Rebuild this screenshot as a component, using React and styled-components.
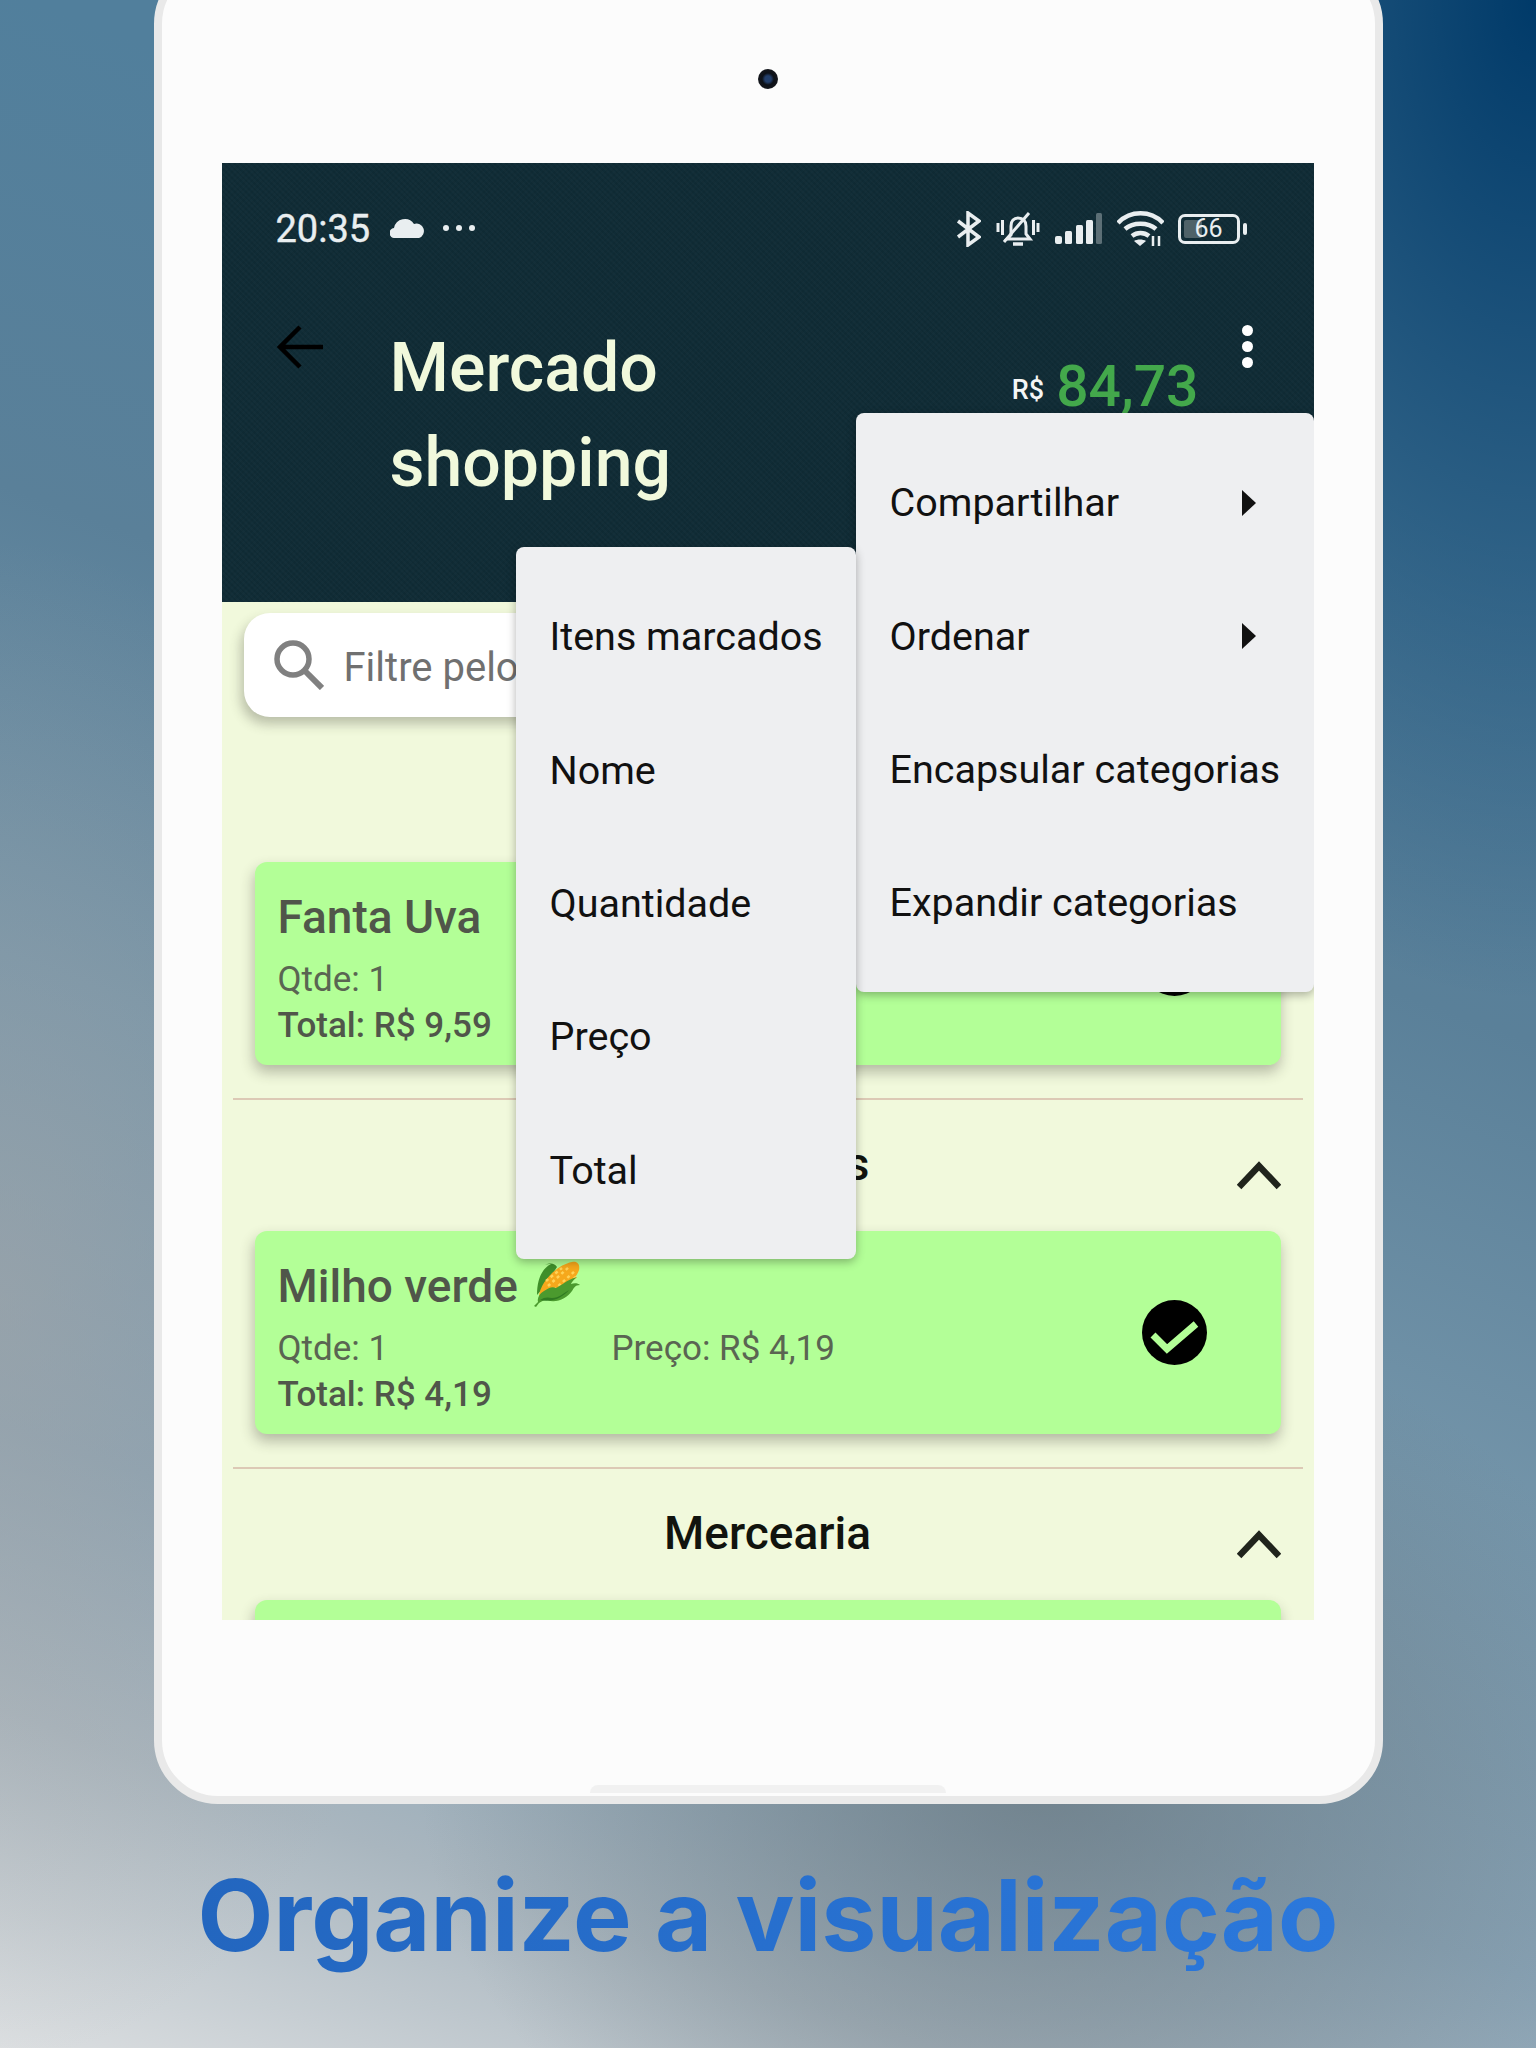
import styled, { createGlobalStyle } from 'styled-components';

const GlobalStyle = createGlobalStyle`
  html, body {
    margin: 0;
    padding: 0;
  }
  body {
    font-family: Roboto, "Liberation Sans", sans-serif;
  }
`

const Page = styled.div`
  width: 1536px;
  height: 2048px;
  overflow: hidden;
  display: flex;
  flex-direction: column;
  align-items: center;
  background:
    radial-gradient(ellipse 620px 480px at 1040px 1780px, rgba(104, 118, 126, 0.7) 0%, rgba(104, 118, 126, 0) 100%),
    radial-gradient(ellipse 460px 760px at 0px 1300px, rgba(165, 165, 165, 0.55) 0%, rgba(165, 165, 165, 0) 100%),
    radial-gradient(ellipse 620px 1000px at 1536px 0px, rgba(0, 58, 105, 1) 0%, rgba(0, 58, 105, 0.55) 45%, rgba(0, 58, 105, 0) 100%),
    linear-gradient(200deg, #517f9c 0%, #517f9c 21%, #5a8099 40%, #7394a9 58%, #88a2b4 76%, #a9b6bf 87%, #dcdfe1 100%);
`

const Device = styled.div`
  box-sizing: border-box;
  flex: none;
  width: 1229px;
  height: 1844px;
  margin-top: -40px;
  border: 8px solid #e9e9e9;
  border-radius: 64px;
  background: #fcfcfc;
  display: flex;
  flex-direction: column;
  align-items: center;
`

const Camera = styled.div`
  flex: none;
  width: 20px;
  height: 20px;
  margin-top: 101px;
  border-radius: 50%;
  background: radial-gradient(circle at 50% 50%, #233f6b 0 22%, #0d1118 42%, #1b1c20 100%);
`

const Screen = styled.div`
  position: relative;
  flex: none;
  align-self: flex-start;
  width: 1092px;
  height: 1457px;
  margin: 74px 0 0 60px;
  overflow: hidden;
  background: #f1f9dc;
`

const HomeBar = styled.div`
  flex: none;
  width: 356px;
  height: 8px;
  margin-top: 165px;
  border-radius: 8px 8px 0 0;
  background: #f1f1f1;
`

const Header = styled.header`
  box-sizing: border-box;
  height: 439px;
  padding-top: 40px;
  background-color: #102c36;
  background-image:
    repeating-linear-gradient(45deg, rgba(255, 255, 255, 0.015) 0 2px, transparent 2px 4px),
    repeating-linear-gradient(-45deg, rgba(0, 0, 0, 0.05) 0 2px, transparent 2px 4px);
`

const StatusBar = styled.div`
  height: 52px;
  padding: 0 67px 0 54px;
  display: flex;
  align-items: center;
  color: #e9eef0;
`

const Time = styled.span`
  font-size: 38px;
  line-height: 52px;
  margin-right: 20px;
  -webkit-text-stroke: 0.4px #e9eef0;
`

const CloudIcon = styled.svg`
  margin-top: -3px;
`

const StatusDots = styled.div`
  display: flex;
  gap: 7px;
  margin: -2px 0 0 19px;
  i {
    width: 6px;
    height: 6px;
    border-radius: 50%;
    background: #e9eef0;
  }
`

const StatusIcons = styled.div`
  margin-left: auto;
  display: flex;
  align-items: center;
  gap: 14px;
`

const Battery = styled.div`
  display: flex;
  align-items: center;
  gap: 3px;
`

const BatteryShell = styled.div`
  box-sizing: border-box;
  width: 62px;
  height: 30px;
  border: 3px solid #e9eef0;
  border-radius: 7px;
  padding: 3px;
  display: flex;
`

const BatteryLevel = styled.div`
  box-sizing: border-box;
  width: 18px;
  padding-left: 11px;
  border-radius: 2px;
  background: #4f6268;
  font-size: 25px;
  line-height: 18px;
  color: #e9eef0;
  white-space: nowrap;
`

const BatteryCap = styled.div`
  width: 4px;
  height: 12px;
  border-radius: 2px;
  background: #e9eef0;
`

const TopBar = styled.div`
  margin-top: 66px;
  padding: 0 61px 0 55px;
  display: flex;
  align-items: flex-start;
`

const BackIcon = styled.svg`
  flex: none;
  margin-top: 4px;
`

const Title = styled.h1`
  margin: 0 0 0 67px;
  font-size: 68px;
  line-height: 95px;
  font-weight: 500;
  color: #f1f9dc;
`

const Price = styled.div`
  margin-left: auto;
  margin-top: 33px;
  display: flex;
  align-items: baseline;
  gap: 12px;
  white-space: nowrap;
`

const PriceLabel = styled.span`
  position: relative;
  top: -7px;
  font-size: 27px;
  font-weight: 500;
  color: #f4f6f6;
`

const PriceValue = styled.span`
  font-size: 57px;
  line-height: 66px;
  font-weight: 500;
  color: #43a84b;
`

const MoreDots = styled.div`
  flex: none;
  margin: 4px 0 0 43px;
  display: flex;
  flex-direction: column;
  gap: 5px;
  i {
    width: 11px;
    height: 11px;
    border-radius: 50%;
    background: #fff;
  }
`

const Body = styled.div`
  padding-top: 11px;
`

const SearchBox = styled.div`
  box-sizing: border-box;
  height: 104px;
  margin: 0 22px 14px;
  padding-left: 30px;
  border-radius: 26px;
  background: #fff;
  box-shadow: -3px 7px 12px rgba(60, 60, 50, 0.3);
  display: flex;
  align-items: center;
  gap: 20px;
`

const SearchText = styled.span`
  margin-top: 5px;
  font-size: 40px;
  color: #707070;
  white-space: nowrap;
`

const Section = styled.section`
  margin: 0 11px;
  padding: 0 22px 33px;
  border-bottom: 2px solid #dcc9b5;
`

const SectionHead = styled.div`
  height: 131px;
  display: grid;
  grid-template-columns: 1fr auto 1fr;
  align-items: start;
`

const SectionTitle = styled.h2`
  margin: 38px 0 0;
  grid-column: 2;
  font-size: 46px;
  line-height: 52px;
  font-weight: 500;
  color: #11140e;
`

const Chevron = styled.svg`
  grid-column: 3;
  justify-self: end;
  margin-top: 61px;
`

const Card = styled.article`
  box-sizing: border-box;
  height: 203px;
  padding: 30px 74px 0 23px;
  border-radius: 12px;
  background: #b3ff97;
  box-shadow: -1px 7px 14px rgba(50, 50, 40, 0.32);
  display: flex;
  justify-content: space-between;
`

const CardText = styled.div`
  display: flex;
  flex-direction: column;
`

const ItemName = styled.div`
  height: 50px;
  margin-bottom: 15px;
  display: flex;
  align-items: center;
  gap: 14px;
  font-size: 46px;
  line-height: 50px;
  font-weight: 500;
  color: #50564a;
`

const ItemRow = styled.div`
  display: grid;
  grid-template-columns: 334px 1fr;
  font-size: 35px;
  line-height: 46px;
  color: #5a6552;
`

const ItemTotal = styled.div`
  font-size: 35px;
  line-height: 46px;
  font-weight: 500;
  color: #50564a;
`

const CheckIcon = styled.svg`
  flex: none;
  margin-top: 39px;
`

const Menu = styled.div`
  position: absolute;
  box-sizing: border-box;
  top: ${p => p.$top}px;
  left: ${p => p.$left}px;
  width: ${p => p.$width}px;
  padding: 23px 0 22px;
  border-radius: 8px;
  background: #eeeff1;
  box-shadow: 0 3px 10px rgba(0, 0, 0, 0.3);
`

const MenuItem = styled.div`
  height: 133.4px;
  padding: 0 34px;
  display: flex;
  align-items: center;
  justify-content: space-between;
  font-size: 39.5px;
  color: #111;
  white-space: nowrap;
`

const MenuArrow = styled.svg`
  margin-right: 24px;
`

const Tagline = styled.h3`
  margin: 52px 0 0;
  font-family: Inter, "Liberation Sans", sans-serif;
  font-size: 98.5px;
  line-height: 120px;
  font-weight: 700;
  white-space: nowrap;
  background: linear-gradient(90deg, #2366bf, #2b78dc);
  background-clip: text;
  -webkit-background-clip: text;
  color: transparent;
`

const mainMenu = ['Compartilhar', 'Ordenar', 'Encapsular categorias', 'Expandir categorias']
const sortMenu = ['Itens marcados', 'Nome', 'Quantidade', 'Preço', 'Total']

const sections = [
  { title: 'Bebidas', name: 'Fanta Uva', price: '9,59', total: '9,59' },
  { title: 'Enlatados', name: 'Milho verde', corn: true, price: '4,19', total: '4,19' },
  { title: 'Mercearia', name: 'Arroz', price: '5,29', total: '5,29' },
]

function CornIcon() {
  return (
    <svg width="50" height="50" viewBox="0 0 50 50">
      <path d="M5 34C5 20 9 8 19 3c-3 0-4 0-6 1 6-3 10-1 12 2L12 26z" fill="#3f8f2a" />
      <path d="M7 35C8 22 24 4 40 1c6-1 8 3 7 8-4 12-22 28-40 26z" fill="#f6a81c" />
      <path d="M16 25 37 6M14 20 30 7M22 29 44 9M28 29 45 15" stroke="#ffd257" strokeWidth="2.500" strokeDasharray="3 3" />
      <path d="M2 45l4-4c-1-4 2-9 6-11 5-3 8-5 12-3 5-2 10-8 21-11-5 4-6 7-6 7 3-1 7-1 9 1-5 0-6 3-8 6-5 7-16 13-25 9-3 0-5 1-8 3l-3 4z" fill="#4b9a2e" />
      <path d="M8 39c4-3 8-3 12-2 7 0 12-5 17-8-5 6-15 13-29 10z" fill="#2f7a22" />
    </svg>
  )
}

function Item({ name, corn, price, total }) {
  return (
    <Card>
      <CardText>
        <ItemName>
          {name}
          {corn && <CornIcon />}
        </ItemName>
        <ItemRow>
          <span>Qtde: 1</span>
          <span>Preço: R$ {price}</span>
        </ItemRow>
        <ItemTotal>Total: R$ {total}</ItemTotal>
      </CardText>
      <CheckIcon width="65" height="65" viewBox="0 0 65 65">
        <circle cx="32.5" cy="32.5" r="32.5" fill="#000" />
        <path d="M11 35l14 14 29-25" fill="none" stroke="#b3ff97" strokeWidth="7" />
      </CheckIcon>
    </Card>
  )
}

function App() {
  return (
    <Page>
      <GlobalStyle />
      <Device>
        <Camera />
        <Screen>
          <Header>
            <StatusBar>
              <Time>20:35</Time>
              <CloudIcon width="34" height="21" viewBox="0 0 34 21">
                <path d="M5 21a5 5 0 0 1-1-10A11 11 0 0 1 24 7a7 7 0 0 1 5 14z" fill="#e9eef0" />
              </CloudIcon>
              <StatusDots><i /><i /><i /></StatusDots>
              <StatusIcons>
                <svg width="25" height="36" viewBox="0 0 25 36" fill="none" stroke="#e9eef0" strokeWidth="3.500">
                  <path d="M2 10l21 16-11 8V2l11 8L2 26" />
                </svg>
                <svg width="46" height="36" viewBox="0 0 46 36" fill="none" stroke="#e9eef0" strokeWidth="3">
                  <path d="M13 27l3-3v-9c0-5 3-8 7-8 5 0 8 3 8 8v8l4 5H12z" />
                  <path d="M18 33h10" strokeWidth="3.500" />
                  <path d="M9 31 34 2" />
                  <path d="M3 12v9M7.500 9v15M38.500 9v15M43 12v9" strokeWidth="3" />
                </svg>
                <svg width="48" height="32" viewBox="0 0 48 32" fill="#e9eef0">
                  <rect x="0" y="23" width="7" height="8" rx="2" />
                  <rect x="10" y="18" width="7" height="13" rx="1.500" />
                  <rect x="21" y="12" width="7" height="19" rx="1.500" />
                  <rect x="31" y="7" width="7" height="24" rx="1.500" />
                  <rect x="41" y="0" width="6" height="31" rx="1.500" fill="#5c6f76" />
                </svg>
                <svg width="47" height="36" viewBox="0 0 47 36" fill="none" stroke="#e9eef0" strokeWidth="4.500">
                  <path d="M1 12C13-1 34-1 46 12" />
                  <path d="M8 18c8-7 23-7 31 0" />
                  <path d="M15 25c5-4 12-4 17 0" />
                  <path d="M23 35l-6-5c3-2 9-2 12 0z" fill="#e9eef0" stroke="none" />
                  <path d="M36 25v10M42 25v10" strokeWidth="2.500" />
                </svg>
                <Battery>
                  <BatteryShell>
                    <BatteryLevel>66</BatteryLevel>
                  </BatteryShell>
                  <BatteryCap />
                </Battery>
              </StatusIcons>
            </StatusBar>
            <TopBar>
              <BackIcon width="46" height="44" viewBox="0 0 46 44" fill="none" stroke="#000" strokeWidth="4.500">
                <path d="M23 2 3 22l20 20M3 22h43" />
              </BackIcon>
              <Title>Mercado<br />shopping</Title>
              <Price>
                <PriceLabel>R$</PriceLabel>
                <PriceValue>84,73</PriceValue>
              </Price>
              <MoreDots><i /><i /><i /></MoreDots>
            </TopBar>
          </Header>
          <Body>
            <SearchBox>
              <svg width="50" height="50" viewBox="0 0 50 50" fill="none" stroke="#808080" strokeWidth="5.500">
                <circle cx="19" cy="19" r="16" />
                <path d="M30 30l18 18" strokeWidth="6" />
              </svg>
              <SearchText>Filtre pelo nome</SearchText>
            </SearchBox>
            {sections.map(section => (
              <Section key={section.title}>
                <SectionHead>
                  <SectionTitle>{section.title}</SectionTitle>
                  <Chevron width="44" height="29" viewBox="0 0 44 29" fill="none" stroke="#20241c" strokeWidth="6.500">
                    <path d="M2 26 22 5l20 21" />
                  </Chevron>
                </SectionHead>
                <Item {...section} />
              </Section>
            ))}
          </Body>
          <Menu $top={250} $left={634} $width={458}>
            {mainMenu.map((label, i) => (
              <MenuItem key={label}>
                {label}
                {i < 2 && (
                  <MenuArrow width="15" height="26" viewBox="0 0 15 26"><path d="M1 0l14 13L1 26z" fill="#111" /></MenuArrow>
                )}
              </MenuItem>
            ))}
          </Menu>
          <Menu $top={384} $left={294} $width={340}>
            {sortMenu.map(label => <MenuItem key={label}>{label}</MenuItem>)}
          </Menu>
        </Screen>
        <HomeBar />
      </Device>
      <Tagline>Organize a visualização</Tagline>
    </Page>
  )
}

export default App
